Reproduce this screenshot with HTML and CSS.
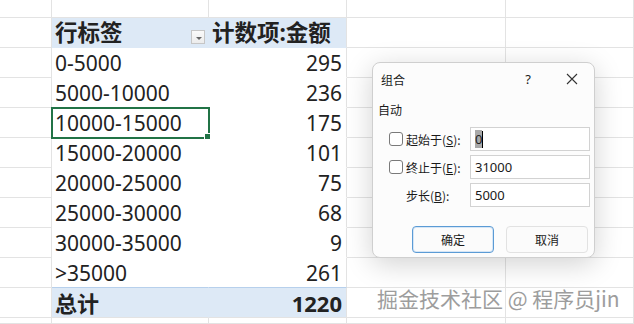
FILE: index.html
```html
<!DOCTYPE html>
<html lang="zh-CN">
<head>
  <meta charset="UTF-8" />
  <meta name="viewport" content="width=device-width, initial-scale=1.0" />
  <title>数据透视表 - 组合</title>
  <link rel="stylesheet" href="styles.css">
</head>
<body>
  <div class="sheet">
    <!-- row 0 -->
    <div class="cell"></div><div class="cell"></div><div class="cell"></div><div class="cell"></div><div class="cell"></div>
    <!-- header -->
    <div class="cell"></div>
    <div class="cell pv head"><span>行标签</span><span class="drop"></span></div>
    <div class="cell pv head last num">计数项:金额</div>
    <div class="cell"></div><div class="cell"></div>
    <!-- data -->
    <div class="cell"></div><div class="cell pv">0-5000</div><div class="cell pv last num">295</div><div class="cell"></div><div class="cell"></div>
    <div class="cell"></div><div class="cell pv">5000-10000</div><div class="cell pv last num">236</div><div class="cell"></div><div class="cell"></div>
    <div class="cell"></div><div class="cell pv active">10000-15000</div><div class="cell pv last num">175</div><div class="cell"></div><div class="cell"></div>
    <div class="cell"></div><div class="cell pv">15000-20000</div><div class="cell pv last num">101</div><div class="cell"></div><div class="cell"></div>
    <div class="cell"></div><div class="cell pv">20000-25000</div><div class="cell pv last num">75</div><div class="cell"></div><div class="cell"></div>
    <div class="cell"></div><div class="cell pv">25000-30000</div><div class="cell pv last num">68</div><div class="cell"></div><div class="cell"></div>
    <div class="cell"></div><div class="cell pv">30000-35000</div><div class="cell pv last num">9</div><div class="cell"></div><div class="cell"></div>
    <div class="cell"></div><div class="cell pv">&gt;35000</div><div class="cell pv last num">261</div><div class="cell"></div><div class="cell"></div>
    <!-- total -->
    <div class="cell"></div>
    <div class="cell pv total">总计</div>
    <div class="cell pv total last num">1220</div>
    <div class="cell"></div><div class="cell"></div>
    <!-- row 11 -->
    <div class="cell"></div><div class="cell"></div><div class="cell"></div><div class="cell"></div><div class="cell"></div>
  </div>

  <div class="dialog">
    <div class="dlg-title">
      <span class="dlg-name">组合</span>
      <span class="dlg-help">?</span>
      <svg class="dlg-close" width="12" height="12" viewBox="0 0 12 12">
        <path d="M1 1 L11 11 M11 1 L1 11" stroke="#333" stroke-width="1.1" fill="none" />
      </svg>
    </div>
    <div class="dlg-group">自动</div>
    <div class="dlg-row">
      <span class="check"></span>
      <span class="dlg-label">起始于(<u>S</u>):</span>
      <span class="field"><span class="sel">0</span><span class="caret"></span></span>
    </div>
    <div class="dlg-row">
      <span class="check"></span>
      <span class="dlg-label">终止于(<u>E</u>):</span>
      <span class="field">31000</span>
    </div>
    <div class="dlg-row">
      <span class="check blank"></span>
      <span class="dlg-label">步长(<u>B</u>):</span>
      <span class="field">5000</span>
    </div>
    <div class="dlg-buttons">
      <span class="btn primary">确定</span>
      <span class="btn">取消</span>
    </div>
  </div>

  <div class="mark">掘金技术社区 @ 程序员jin</div>
</body>
</html>
```

FILE: styles.css
```css
body {
  margin: 0;
  width: 634px;
  height: 324px;
  overflow: hidden;
  background: #fff;
  font-family: "Noto Sans", "Noto Sans CJK SC", sans-serif;
  color: #222;
}
.sheet {
  display: grid;
  grid-template-columns: 52px 157px 138px 159px 1fr;
  grid-template-rows: 18px repeat(10, 30px) 1fr;
  height: 324px;
}
.cell {
  box-sizing: border-box;
  border-right: 1px solid #e3e3e3;
  border-bottom: 1px solid #e3e3e3;
  font-size: 21px;
  line-height: 26px;
  padding: 0 3px 1px 3px;
  display: flex;
  align-items: flex-end;
  white-space: nowrap;
}
.pv {
  border-right-color: #fff;
  border-bottom-color: #fff;
}
.pv.last {
  border-right-color: #e3e3e3;
}
.num {
  justify-content: flex-end;
  padding-right: 4px;
}
.head {
  background: #dde9f6;
  border-right-color: #dde9f6;
  border-bottom-color: #dde9f6;
  font-weight: 700;
  font-size: 22.5px;
  justify-content: space-between;
}
.head.last {
  border-right-color: #e3e3e3;
}
.drop {
  width: 14px;
  height: 14px;
  margin: 0 0 2px 0;
  box-sizing: border-box;
  border: 1px solid #c6c6c6;
  background: linear-gradient(#fafafa, #ececec);
  position: relative;
}
.drop::after {
  content: "";
  position: absolute;
  left: 4px;
  top: 6px;
  border-left: 3px solid transparent;
  border-right: 3px solid transparent;
  border-top: 3px solid #666;
}
.total {
  background: #dde9f6;
  border-top: 1px solid #b7d0ec;
  border-right-color: #dde9f6;
  border-bottom-color: #e3e3e3;
  font-weight: 700;
  font-size: 22px;
  margin-top: -1px;
}
.total.last {
  border-right-color: #e3e3e3;
}
.active {
  position: relative;
  outline: 2px solid #217346;
  outline-offset: -1px;
}
.active::after {
  content: "";
  position: absolute;
  right: -3px;
  bottom: -3px;
  width: 5px;
  height: 5px;
  background: #217346;
  border: 1px solid #fff;
}

.dialog {
  position: absolute;
  left: 372px;
  top: 62px;
  width: 223px;
  height: 196px;
  box-sizing: border-box;
  background: #fcfcfc;
  border: 1px solid #cfcfcf;
  border-radius: 8px;
  box-shadow: 0 6px 28px rgba(0, 0, 0, 0.18);
  font-family: "Noto Sans CJK SC", "Noto Sans", sans-serif;
  font-size: 12px;
  color: #1a1a1a;
  display: flex;
  flex-direction: column;
}
.dlg-title {
  height: 32px;
  display: flex;
  align-items: center;
  padding: 0 16px 0 8px;
}
.dlg-name {
  flex: 1;
}
.dlg-help {
  font-family: "Noto Sans", sans-serif;
  font-size: 13px;
  margin-right: 35px;
}
.dlg-group {
  padding: 6px 0 0 5px;
  height: 22px;
}
.dlg-row {
  display: flex;
  align-items: center;
  height: 24px;
  margin-top: 4px;
  padding-left: 16px;
}
.check {
  width: 12px;
  height: 12px;
  border: 1px solid #7a7a7a;
  border-radius: 3px;
  background: #fff;
  margin-right: 3px;
}
.check.blank {
  border-color: transparent;
  background: none;
}
.dlg-label {
  width: 64px;
  white-space: nowrap;
}
.field {
  width: 120px;
  height: 24px;
  box-sizing: border-box;
  border: 1px solid #d2d2d2;
  background: #fff;
  font-family: "Noto Sans", sans-serif;
  font-size: 13px;
  line-height: 20px;
  padding: 0 4px;
  display: flex;
  align-items: center;
}
.sel {
  background: #a9a9a9;
  color: #222;
  line-height: 18px;
}
.caret {
  width: 1px;
  height: 17px;
  background: #000;
}
.dlg-buttons {
  display: flex;
  justify-content: flex-end;
  gap: 12px;
  padding: 19px 6px 0 0;
}
.btn {
  width: 82px;
  height: 27px;
  box-sizing: border-box;
  border: 1px solid #e2e2e2;
  border-radius: 4px;
  background: #fbfbfb;
  display: flex;
  align-items: center;
  justify-content: center;
}
.btn.primary {
  border: 1px solid #5b9bd5;
  box-shadow: inset 0 0 0 1px #d6e6f6;
}

.mark {
  position: absolute;
  left: 377px;
  top: 283px;
  font-family: "Noto Sans CJK SC", sans-serif;
  font-size: 21px;
  color: #9d9d9d;
  text-shadow: 1px 1px 0 #fff, -1px -1px 0 #fff, 1px -1px 0 #fff, -1px 1px 0 #fff;
  white-space: nowrap;
}
```
